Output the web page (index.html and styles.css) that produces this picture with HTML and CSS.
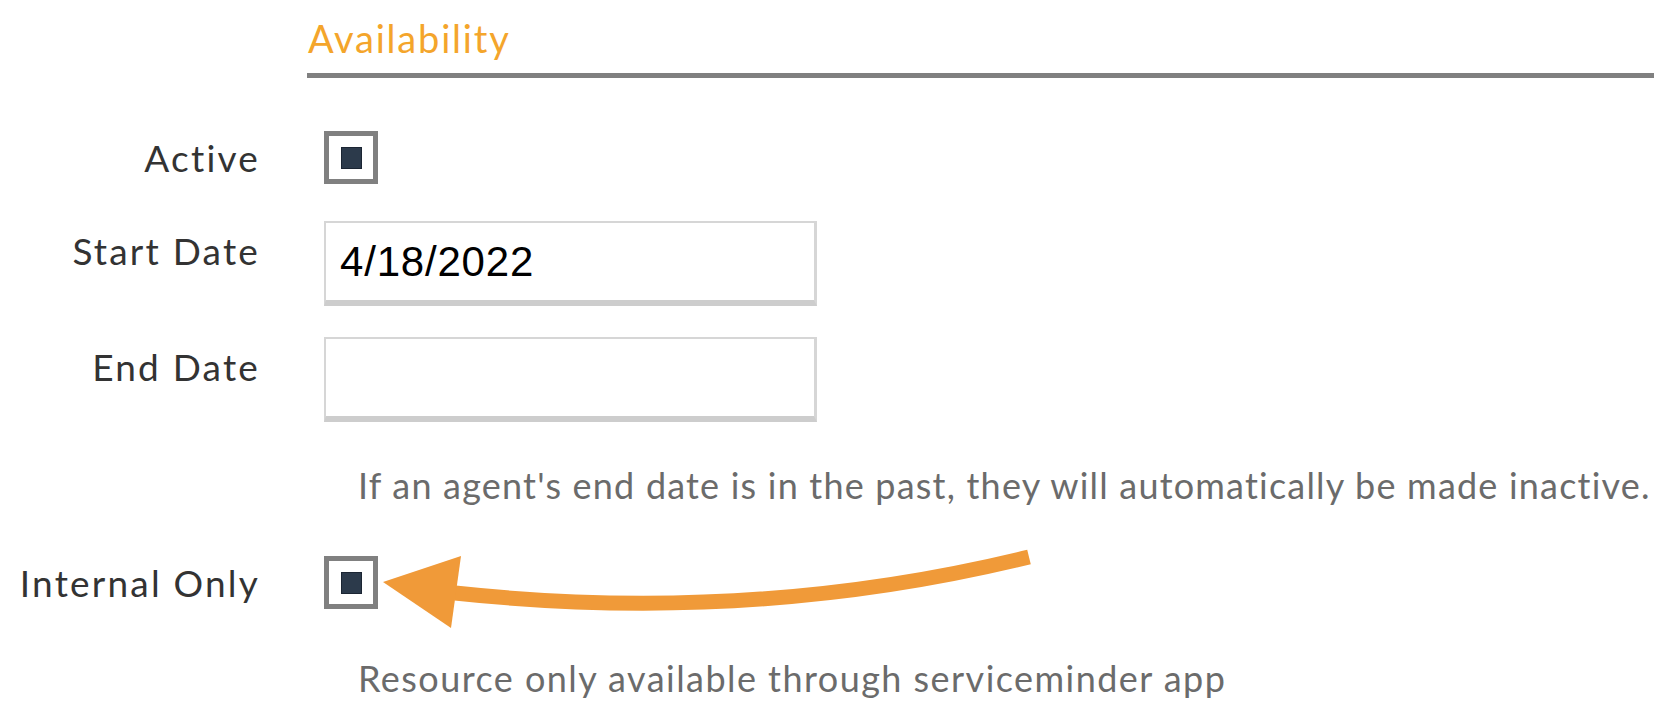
FILE: index.html
```html
<!DOCTYPE html>
<html lang="en">
<head>
    <meta charset="UTF-8">
    <meta name="viewport" content="width=device-width, initial-scale=1.0">
    <title>Resource - Availability</title>
    <link rel="stylesheet" href="styles.css">
</head>
<body>
    <div class="page">
        <div class="section-head">
            <h2 class="section-title">Availability</h2>
        </div>

        <div class="row row-check row-active">
            <div class="row-label">Active</div>
            <div class="row-control">
                <span class="check"><span class="check-mark"></span></span>
            </div>
        </div>

        <div class="row row-input row-start">
            <div class="row-label">Start Date</div>
            <div class="row-control">
                <input type="text" class="text-input" value="4/18/2022">
            </div>
        </div>

        <div class="row row-input row-end">
            <div class="row-label">End Date</div>
            <div class="row-control">
                <input type="text" class="text-input" value="">
            </div>
        </div>

        <p class="help help-end">If an agent's end date is in the past, they will automatically be made inactive.</p>

        <div class="row row-check row-internal">
            <div class="row-label">Internal Only</div>
            <div class="row-control">
                <span class="check"><span class="check-mark"></span></span>
            </div>
        </div>

        <p class="help help-internal">Resource only available through serviceminder app</p>

        <!-- callout arrow pointing at the Internal Only box -->
        <svg class="callout" viewBox="0 0 1654 712" width="1654" height="712">
            <path d="M455 593 Q752 625 1029 557" fill="none" stroke="#f09a39" stroke-width="15"/>
            <polygon points="383,582 461,556 451,628" fill="#f09a39"/>
        </svg>
    </div>
</body>
</html>
```

FILE: styles.css
```css
* {
    margin: 0;
    padding: 0;
    box-sizing: border-box;
}

body {
    font-family: 'Lato', 'Liberation Sans', sans-serif;
    background: #fff;
    color: #333;
}

.page {
    position: relative;
    width: 1654px;
    height: 712px;
    overflow: hidden;
}

.section-head {
    margin-left: 307px;
    padding-top: 15px;
    border-bottom: 5px solid #808080;
    height: 78px;
}

.section-title {
    margin-left: 1px;
    font-size: 38px;
    line-height: 46px;
    font-weight: 400;
    letter-spacing: 1.8px;
    color: #f4a52b;
}

.row {
    display: flex;
}

.row-label {
    width: 260px;
    flex-shrink: 0;
    text-align: right;
    font-size: 37px;
    line-height: 44px;
    letter-spacing: 2.2px;
    color: #333;
}

.row-control {
    margin-left: 64px;
}

.row-check {
    align-items: center;
}

.row-input .row-label {
    padding-top: 8px;
}

.row-active {
    margin-top: 53px;
}

.row-start {
    margin-top: 37px;
}

.row-end {
    margin-top: 31px;
}

.row-internal {
    margin-top: 49px;
}

.check {
    display: flex;
    align-items: center;
    justify-content: center;
    width: 54px;
    height: 53px;
    border: 5px solid #808080;
    background: #fff;
}

.check-mark {
    width: 21px;
    height: 22px;
    background: #2c3a4b;
    border: 1px solid #1b2533;
}

.text-input {
    display: block;
    width: 493px;
    height: 85px;
    border: 2px solid #d6d6d6;
    border-right-width: 3px;
    border-bottom: 6px solid #cdcdcd;
    padding: 0 14px;
    font-family: 'Liberation Sans', Arial, sans-serif;
    font-size: 42px;
    letter-spacing: 0.8px;
    color: #000;
    background: #fff;
    outline: none;
}

.help {
    margin-left: 358px;
    font-size: 36px;
    line-height: 43px;
    letter-spacing: 1.2px;
    color: #6b6b6b;
    white-space: nowrap;
}

.help-end {
    margin-top: 42px;
}

.help-internal {
    margin-top: 48px;
    letter-spacing: 1.45px;
}

.callout {
    position: absolute;
    top: 0;
    left: 0;
    pointer-events: none;
}
```
